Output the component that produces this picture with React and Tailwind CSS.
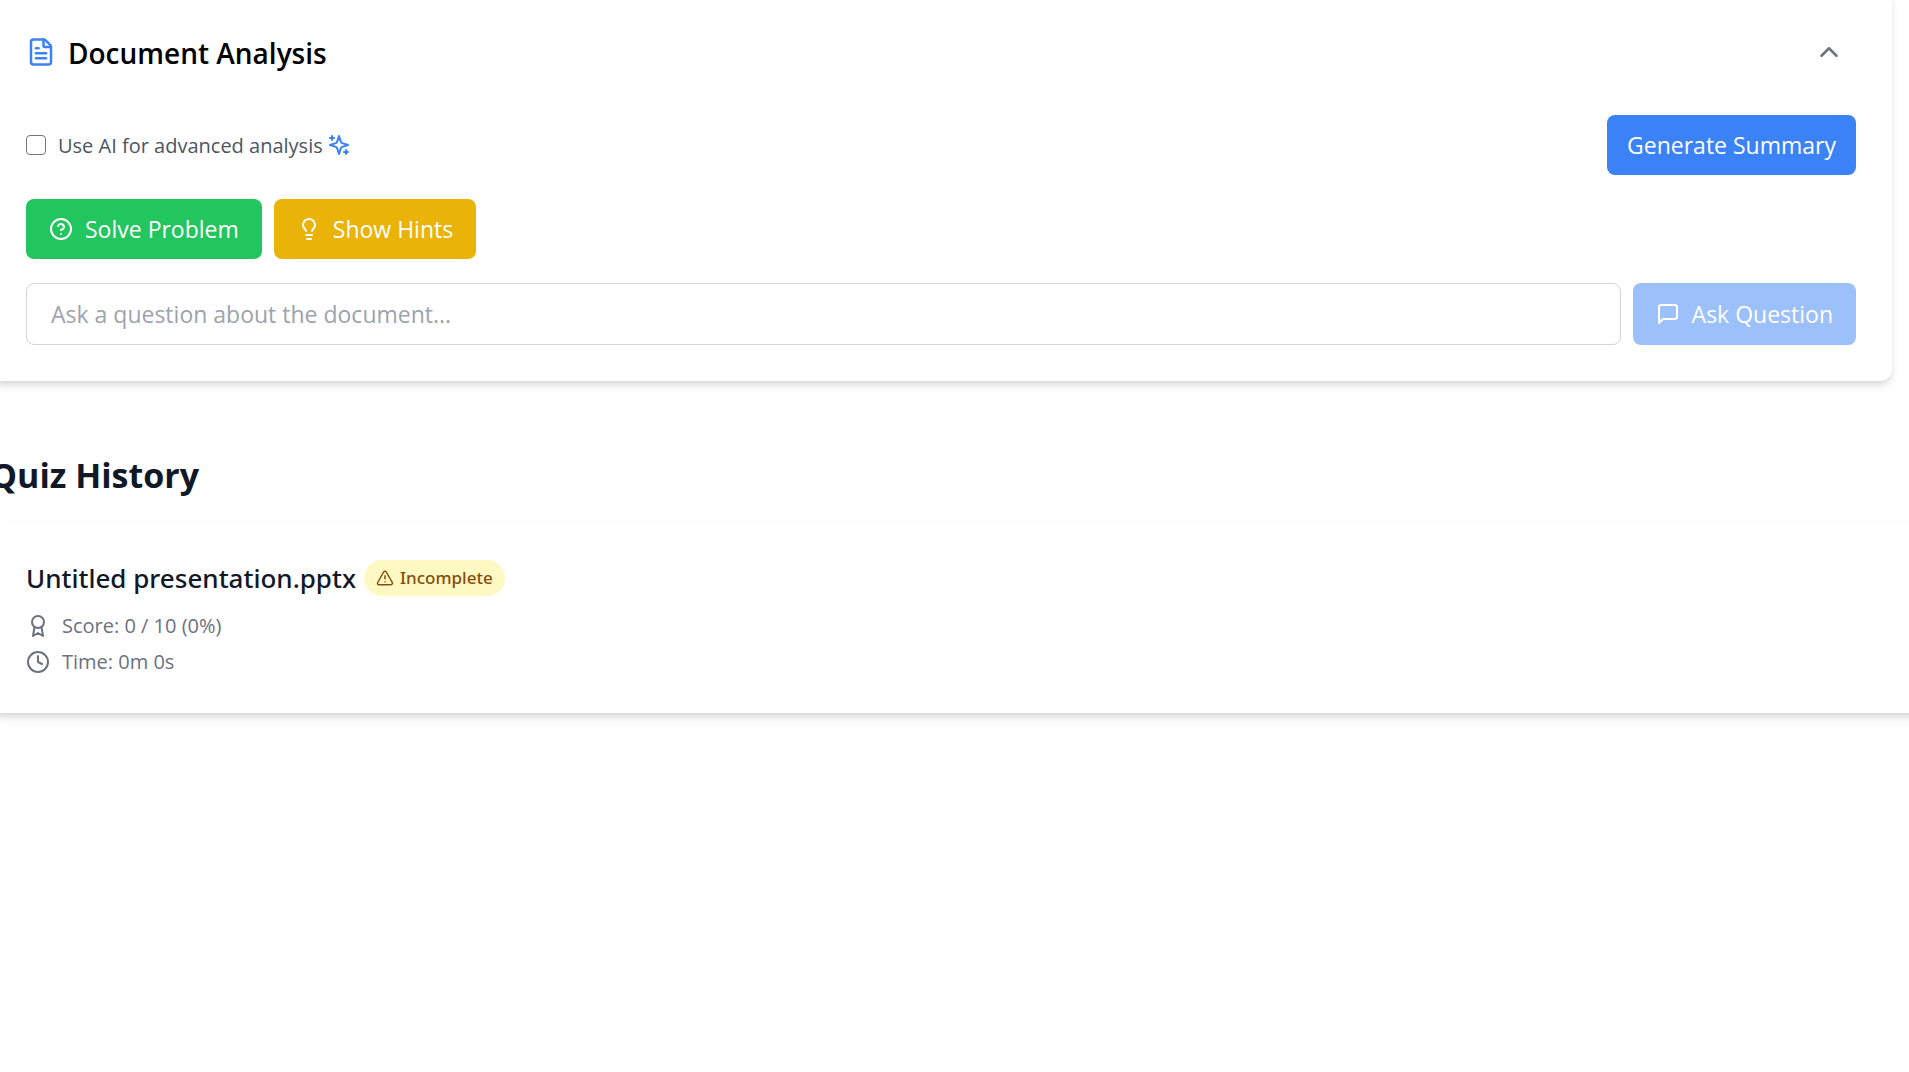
import React, { useState } from "react";
import {
  FileText,
  ChevronUp,
  ChevronDown,
  CircleHelp,
  Lightbulb,
  TriangleAlert,
  Clock,
} from "lucide-react";

const history = [
  {
    id: 1,
    name: "Untitled presentation.pptx",
    score: 0,
    total: 10,
    time: "0m 0s",
    completed: false,
  },
];

const Icon = ({ className, children }) => (
  <svg
    viewBox="0 0 24 24"
    fill="none"
    stroke="currentColor"
    strokeWidth="2"
    strokeLinecap="round"
    strokeLinejoin="round"
    aria-hidden="true"
    className={className}
  >
    {children}
  </svg>
);

const Sparkles = ({ className }) => (
  <Icon className={className}>
    <path d="m12 3-1.912 5.813a2 2 0 0 1-1.275 1.275L3 12l5.813 1.912a2 2 0 0 1 1.275 1.275L12 21l1.912-5.813a2 2 0 0 1 1.275-1.275L21 12l-5.813-1.912a2 2 0 0 1-1.275-1.275L12 3Z" />
    <path d="M5 3v4" />
    <path d="M19 17v4" />
    <path d="M3 5h4" />
    <path d="M17 19h4" />
  </Icon>
);

const Message = ({ className }) => (
  <Icon className={className}>
    <path d="M21 15a2 2 0 0 1-2 2H7l-4 4V5a2 2 0 0 1 2-2h14a2 2 0 0 1 2 2z" />
  </Icon>
);

const Medal = ({ className }) => (
  <Icon className={className}>
    <circle cx="12" cy="8" r="6" />
    <path d="M15.477 12.89 17 22l-5-3-5 3 1.523-9.11" />
  </Icon>
);

const DocumentAnalysis = () => {
  const [open, setOpen] = useState(true);
  const [useAI, setUseAI] = useState(false);
  const [question, setQuestion] = useState("");

  return (
    <section className="mr-[17px] rounded-xl bg-white p-9 shadow-[0_6px_9px_-1px_rgb(0_0_0/0.1),0_3px_6px_-2px_rgb(0_0_0/0.1)]">
      <div className="mb-9 flex items-center justify-between">
        <div className="flex items-center gap-3">
          <FileText className="size-[30px] text-[#3b82f6]" />
          <h2 className="pt-0.5 text-[28px] leading-[42px] font-semibold text-black">
            Document Analysis
          </h2>
        </div>
        <button
          onClick={() => setOpen(!open)}
          aria-label="Toggle document analysis"
          className="rounded-full p-3 text-[#6b7280]"
        >
          {open ? (
            <ChevronUp className="size-[30px]" />
          ) : (
            <ChevronDown className="size-[30px]" />
          )}
        </button>
      </div>

      {open && (
        <div className="flex flex-col gap-6">
          <div className="flex items-center justify-between">
            <div className="flex items-center gap-3">
              <input
                id="use-ai"
                type="checkbox"
                checked={useAI}
                onChange={(e) => setUseAI(e.target.checked)}
                className="size-5 appearance-none rounded-sm border border-[#767676] bg-white checked:bg-[#3b82f6]"
              />
              <label
                htmlFor="use-ai"
                className="flex items-center gap-1 text-[20px] leading-[30px] text-[#4b5563]"
              >
                <span className="pt-0.5">Use AI for advanced analysis</span>
                <Sparkles className="size-6 text-[#3b82f6]" />
              </label>
            </div>
            <button className="rounded-lg bg-[#3b82f6] px-5 py-3 text-[23px] leading-9 text-white">
              Generate Summary
            </button>
          </div>

          <div className="flex gap-3">
            <button className="flex items-center gap-3 rounded-lg bg-[#22c55e] px-[23px] py-3 text-[23px] leading-9 text-white">
              <CircleHelp className="size-6" />
              Solve Problem
            </button>
            <button className="flex items-center gap-3 rounded-lg bg-[#eab308] px-[23px] py-3 text-[23px] leading-9 text-white">
              <Lightbulb className="size-6" />
              Show Hints
            </button>
          </div>

          <div className="flex gap-3">
            <input
              type="text"
              aria-label="Question"
              placeholder="Ask a question about the document..."
              value={question}
              onChange={(e) => setQuestion(e.target.value)}
              className="min-w-0 flex-1 rounded-lg border border-[#d1d5db] px-6 py-3 text-[23px] leading-9 placeholder:text-[#9ca3af]"
            />
            <button
              disabled={!question}
              className="flex items-center gap-3 rounded-lg bg-[#3b82f6] px-[23px] py-3 text-[23px] leading-9 text-white disabled:opacity-50"
            >
              <Message className="size-6" />
              Ask Question
            </button>
          </div>
        </div>
      )}
    </section>
  );
};

const QuizCard = ({ quiz }) => (
  <article className="rounded-xl bg-white p-9 shadow-[0_6px_9px_-1px_rgb(0_0_0/0.1),0_3px_6px_-2px_rgb(0_0_0/0.1)]">
    <div className="flex items-center gap-2">
      <h3 className="font-['Noto_Sans','Open_Sans',sans-serif] text-[26px] leading-[42px] font-medium text-[#111827]">
        {quiz.name}
      </h3>
      {!quiz.completed && (
        <span className="flex items-center gap-1.5 rounded-full bg-[#fef9c3] px-3 py-1.5 font-['Noto_Sans','Open_Sans',sans-serif] text-[17px] leading-6 font-medium text-[#854d0e]">
          <TriangleAlert className="size-[18px]" />
          Incomplete
        </span>
      )}
    </div>
    <div className="mt-3 flex flex-col gap-1.5 text-[20px] leading-[30px] text-[#6b7280]">
      <p className="flex items-center gap-3">
        <Medal className="size-6" />
        Score: {quiz.score} / {quiz.total} ({(quiz.score / quiz.total) * 100}%)
      </p>
      <p className="flex items-center gap-3">
        <Clock className="size-6" />
        Time: {quiz.time}
      </p>
    </div>
  </article>
);

const App = () => {
  return (
    <div className="min-h-dvh overflow-hidden bg-white font-['Open_Sans','Noto_Sans',sans-serif]">
      <main className="-mt-[11px] -ml-[10px]">
        <DocumentAnalysis />

        <section className="-mr-6 pt-[72px]">
          <h1 className="mb-6 text-[34px] leading-[44px] font-bold text-[#111827]">
            Quiz History
          </h1>
          {history.map((quiz) => (
            <QuizCard key={quiz.id} quiz={quiz} />
          ))}
        </section>
      </main>
    </div>
  );
};

export default App;
